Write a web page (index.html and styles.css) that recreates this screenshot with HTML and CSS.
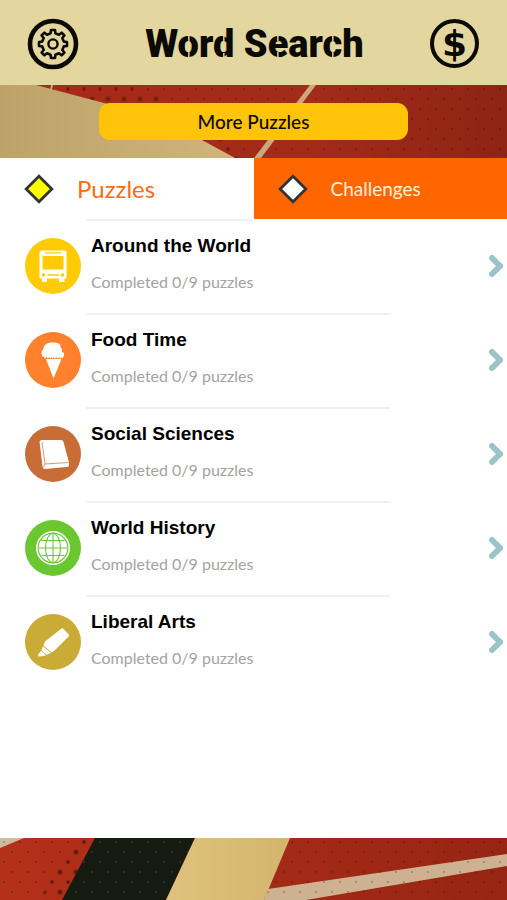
FILE: index.html
```html
<!DOCTYPE html>
<html lang="en">
<head>
<meta charset="utf-8">
<meta name="viewport" content="width=device-width, initial-scale=1">
<title>Word Search</title>
<link rel="stylesheet" href="styles.css">
</head>
<body>
<header class="topbar">
  <button class="round-button" type="button" aria-label="Settings">
    <svg viewBox="0 0 52 52" fill="none" stroke="#0b0a05">
      <circle cx="26" cy="26" r="23" stroke-width="4.6"/>
      <circle cx="26" cy="26" r="4.6" stroke-width="2.4"/>
      <path stroke-width="2.6" stroke-linejoin="round" d="M23.6 15.2 L24 12 H28 L28.4 15.2 L32 16.7 L34.6 14.7 L37.4 17.5 L35.3 20 L36.8 23.6 L40 24 V28 L36.8 28.4 L35.3 32 L37.4 34.5 L34.6 37.3 L32 35.3 L28.4 36.8 L28 40 H24 L23.6 36.8 L20 35.3 L17.4 37.3 L14.6 34.5 L16.7 32 L15.2 28.4 L12 28 V24 L15.2 23.6 L16.7 20 L14.6 17.5 L17.4 14.7 L20 16.7 Z"/>
    </svg>
  </button>
  <h1 class="title">Word Search
    <svg class="stencil" viewBox="0 0 218 46" aria-hidden="true">
      <path d="M43.500 14V40M78.500 14V20M78.500 32V40M132.500 14V20M132.500 31V40M187.500 14V20M187.500 31V40" stroke="#e3d69f" stroke-width="1.400"/>
    </svg>
  </h1>
  <button class="round-button coin" type="button" aria-label="Store"><span class="dollar">$</span></button>
</header>

<section class="banner">
  <svg class="art" viewBox="0 0 507 73" preserveAspectRatio="none" aria-hidden="true">
    <defs>
      <linearGradient id="red" x1="0" x2="1"><stop offset="0" stop-color="#a82a18"/><stop offset=".6" stop-color="#a32b1a"/><stop offset="1" stop-color="#8e2414"/></linearGradient>
      <linearGradient id="sand" x1="0" x2="1"><stop offset="0" stop-color="#bda26a"/><stop offset="1" stop-color="#d0b47c"/></linearGradient>
      <pattern id="dots" width="16" height="20" patternUnits="userSpaceOnUse"><circle cx="4" cy="4" r="1.1"/><circle cx="12" cy="14" r="1.1"/></pattern>
      <pattern id="bigdots" width="16" height="20" patternUnits="userSpaceOnUse"><circle cx="12" cy="14" r="2.6"/><circle cx="4" cy="4" r="2"/></pattern>
    </defs>
    <rect width="507" height="73" fill="url(#red)"/>
    <rect width="507" height="73" fill="url(#dots)" opacity=".25"/>
    <path d="M36 0H140L250 73H200Z" fill="url(#bigdots)" opacity=".22"/>
    <path d="M0 0H36L104 18Q160 32 202 55L235 73H0Z" fill="url(#sand)"/>
    <path d="M310 0H316L261 73H254Z" fill="#cda77c"/>
    <path d="M51 0H53L52 5H50Z" fill="#cda77c"/>
  </svg>
  <button class="more" type="button">More Puzzles</button>
</section>

<nav class="tabs">
  <button class="tab active" type="button">
    <svg class="diamond" viewBox="0 0 28 28" aria-hidden="true"><path d="M14 2L26 14L14 26L2 14Z" fill="#ffff00" stroke="#333" stroke-width="2.6"/></svg>
    <span>Puzzles</span>
  </button>
  <button class="tab" type="button">
    <svg class="diamond" viewBox="0 0 28 28" aria-hidden="true"><path d="M14 2L26 14L14 26L2 14Z" fill="#fff" stroke="#333" stroke-width="2.6"/></svg>
    <span>Challenges</span>
  </button>
</nav>

<main class="list">
  <a class="row" href="#around-the-world">
    <svg class="icon" viewBox="0 0 56 56" aria-hidden="true">
      <circle cx="28" cy="28" r="28" fill="#ffcb05"/>
      <path fill="#fff" fill-rule="evenodd" d="M16.500 12.500H39.500Q41.500 12.500 41.500 14.500V40.500H39.500V44H34V40.500H22V44H17V40.500H14.500V14.500Q14.500 12.500 16.500 12.500ZM20 14.200V15.500H36V14.200ZM17.500 18V31.500H38.500V18ZM22.500 36.200V37.800H34V36.200Z"/>
      <g fill="#ffcb05"><circle cx="18.500" cy="37" r="1.700"/><circle cx="37.500" cy="37" r="1.700"/></g>
    </svg>
    <div class="info"><h2>Around the World</h2><p>Completed 0/9 puzzles</p></div>
    <svg class="chevron" viewBox="0 0 14 22" aria-hidden="true"><path d="M3 3L11 11L3 19"/></svg>
  </a>
  <a class="row" href="#food-time">
    <svg class="icon" viewBox="0 0 56 56" aria-hidden="true">
      <circle cx="28" cy="28" r="28" fill="#ff802d"/>
      <path fill="#fff" d="M18 25C15.500 22 16.500 18.500 18.500 17C18.500 13 22 10.500 27 10.500C31 10.500 34 11 35.500 13L35.500 15.500L37 17L37 20L39 21V24L37.500 25.500Z"/>
      <path fill="#fff" d="M21 27H36.500L28.500 46.500Z"/>
      <path d="M19.500 25.500H38" stroke="#fff" stroke-width="1.500" stroke-dasharray="1.500 1"/>
    </svg>
    <div class="info"><h2>Food Time</h2><p>Completed 0/9 puzzles</p></div>
    <svg class="chevron" viewBox="0 0 14 22" aria-hidden="true"><path d="M3 3L11 11L3 19"/></svg>
  </a>
  <a class="row" href="#social-sciences">
    <svg class="icon" viewBox="0 0 56 56" aria-hidden="true">
      <circle cx="28" cy="28" r="28" fill="#c86d35"/>
      <path fill="#fff" d="M14.500 15.500Q15 14 17 14H36Q38 14 38.500 16L44 36.500V39.500Q43.500 41 41.500 41L20 43Q18 43 17.500 40.500Z"/>
      <path d="M17 16L20 38L43.500 36.500M20 38L18.500 41" fill="none" stroke="#c86d35" stroke-width=".7"/>
    </svg>
    <div class="info"><h2>Social Sciences</h2><p>Completed 0/9 puzzles</p></div>
    <svg class="chevron" viewBox="0 0 14 22" aria-hidden="true"><path d="M3 3L11 11L3 19"/></svg>
  </a>
  <a class="row" href="#world-history">
    <svg class="icon" viewBox="0 0 56 56" aria-hidden="true">
      <circle cx="28" cy="28" r="28" fill="#6bc72f"/>
      <circle cx="28" cy="28" r="16.200" fill="none" stroke="#fff" stroke-width="1.600"/>
      <circle cx="28" cy="28" r="14.300" fill="#fff"/>
      <g fill="none" stroke="#6bc72f" stroke-width="1.100"><path d="M28 14V42M14 28H42M16.500 20.500H39.500M16.500 35.500H39.500"/><ellipse cx="28" cy="28" rx="7.500" ry="14.500"/></g>
    </svg>
    <div class="info"><h2>World History</h2><p>Completed 0/9 puzzles</p></div>
    <svg class="chevron" viewBox="0 0 14 22" aria-hidden="true"><path d="M3 3L11 11L3 19"/></svg>
  </a>
  <a class="row" href="#liberal-arts">
    <svg class="icon" viewBox="0 0 56 56" aria-hidden="true">
      <circle cx="28" cy="28" r="28" fill="#c9ab35"/>
      <path fill="#fff" d="M36.500 14.500Q37.500 13.800 38.300 14.700L43.800 20.500Q44.500 21.500 43.700 22.500L29.500 36.500L26.500 38.500L18.500 31.500L20 27.500ZM17.800 32.200L26 39L21.500 40.800L16.500 36.200ZM16 36.700L21 41.200L17 42.200L13 42.500Q13 39.500 16 36.700Z"/>
    </svg>
    <div class="info"><h2>Liberal Arts</h2><p>Completed 0/9 puzzles</p></div>
    <svg class="chevron" viewBox="0 0 14 22" aria-hidden="true"><path d="M3 3L11 11L3 19"/></svg>
  </a>
</main>

<footer class="foot">
  <svg class="art" viewBox="0 0 507 62" preserveAspectRatio="none" aria-hidden="true">
    <defs>
      <linearGradient id="gold" x1="0" x2="1"><stop offset="0" stop-color="#dfc27d"/><stop offset="1" stop-color="#d3b56e"/></linearGradient>
      <linearGradient id="brick" x1="0" x2="1"><stop offset="0" stop-color="#b43019"/><stop offset="1" stop-color="#962513"/></linearGradient>
      <pattern id="palebits" width="16" height="20" patternUnits="userSpaceOnUse"><circle cx="4" cy="4" r="1.2" fill="#4a5344"/><circle cx="12" cy="14" r="1.2" fill="#4a5344"/></pattern>
    </defs>
    <rect width="507" height="62" fill="url(#brick)"/>
    <path d="M0 0H24L0 10Z" fill="#cdbb9c"/>
    <path d="M268 51L507 16V28L306 62H264Z" fill="#ceb190"/>
    <rect width="507" height="62" fill="url(#dots)" opacity=".25"/>
    <path d="M74 0H95L62 62H40Z" fill="url(#bigdots)" opacity=".35"/>
    <path d="M95 0H195L166 62H62Z" fill="#151b11"/>
    <path d="M95 0H195L166 62H62Z" fill="url(#palebits)" opacity=".4"/>
    <path d="M195 0H290L264 62H166Z" fill="url(#gold)"/>
  </svg>
</footer>
</body>
</html>
```
FILE: styles.css
```css
* { box-sizing: border-box; }

body {
  margin: 0;
  min-height: 100vh;
  display: flex;
  flex-direction: column;
  background: #fff;
  font-family: Lato, "Liberation Sans", sans-serif;
}

button {
  border: 0;
  padding: 0;
  background: none;
  font: inherit;
  color: inherit;
  cursor: pointer;
}

svg { display: block; flex: none; }

.topbar {
  display: flex;
  align-items: center;
  justify-content: space-between;
  height: 85px;
  padding: 2px 28px 0 27px;
  background: #e3d69f;
}

.round-button { width: 52px; height: 52px; }
.round-button svg { width: 52px; height: 52px; }

.coin {
  display: flex;
  align-items: center;
  justify-content: center;
  width: 49px;
  height: 49px;
  border: 4px solid #0b0a05;
  border-radius: 50%;
}

.dollar {
  font: bold 36px/40px "DejaVu Sans", sans-serif;
  color: #0b0a05;
}

.title {
  position: relative;
  margin: 0;
  font: 900 38px/46px Roboto, sans-serif;
  color: #0b0a05;
}

.stencil {
  position: absolute;
  inset: 0;
  width: 100%;
  height: 100%;
}

.banner {
  position: relative;
  display: flex;
  justify-content: center;
  padding: 18px 0;
}

.art {
  position: absolute;
  inset: 0;
  width: 100%;
  height: 100%;
}

.more {
  position: relative;
  width: 61%;
  height: 37px;
  border-radius: 11px;
  background: #ffc40a;
  color: #0b0a05;
  font-size: 19px;
  font-weight: 500;
}

.tabs {
  display: grid;
  grid-template-columns: 1fr 1fr;
  height: 61px;
}

.tab {
  display: flex;
  align-items: center;
  gap: 23px;
  padding-left: 24px;
  background: #ff6600;
  color: #fff0dc;
  font-size: 19px;
}

.tab.active {
  background: #fff;
  color: #fb6c10;
  font-size: 24px;
}

.diamond { width: 30px; height: 30px; }

.list {
  flex: 1;
  background: #fff;
}

.row {
  position: relative;
  display: flex;
  align-items: center;
  gap: 10px;
  height: 94px;
  padding: 0 4px 0 25px;
  color: #000;
  text-decoration: none;
}

.row::before {
  content: "";
  position: absolute;
  top: 0;
  left: 86px;
  width: 60%;
  height: 2px;
  background: #f0f0f0;
}

.row:first-child::before { width: 33%; }

.icon { width: 56px; height: 56px; }

.info {
  flex: 1;
  padding-bottom: 4px;
}

.info h2 {
  margin: 0;
  font: bold 19px/24px "Liberation Sans", Arial, sans-serif;
}

.info p {
  margin: 12px 0 0;
  font-size: 16px;
  line-height: 24px;
  color: #a3a3a3;
}

.chevron { width: 14px; height: 22px; }

.chevron path {
  fill: none;
  stroke: #9cc3c8;
  stroke-width: 6;
  stroke-linecap: round;
}

.foot {
  position: relative;
  height: 62px;
}
```
